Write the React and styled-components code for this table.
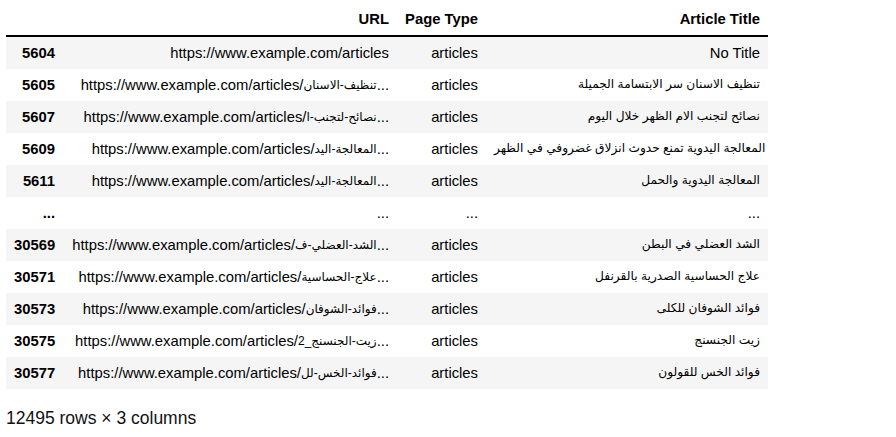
import React from "react";
import styled, { createGlobalStyle } from "styled-components";

const Global = createGlobalStyle`
  html, body { margin: 0; padding: 0; background: #ffffff; }
  body { font-family: "Liberation Sans", Arial, "DejaVu Sans", sans-serif; color: #000; }
`;

const Page = styled.div`
  padding: 3px 0 0 6px;
`;

const Table = styled.table`
  border-collapse: collapse;
  border-spacing: 0;
  table-layout: fixed;
  width: 762px;
  font-size: 14.8px;
  line-height: 16px;
  color: #000;
`;

const Head = styled.thead`
  border-bottom: 2px solid #000;
  vertical-align: bottom;
`;

const HeadCell = styled.th`
  font-weight: bold;
  text-align: right;
  padding: 8px;
  white-space: nowrap;
  width: ${(p) => p.$w}px;
`;

const Row = styled.tr`
  background: ${(p) => (p.$odd ? "#f5f5f5" : "#ffffff")};
`;

const IndexCell = styled.th`
  font-weight: bold;
  text-align: right;
  vertical-align: middle;
  padding: 8px;
  white-space: nowrap;
`;

const Cell = styled.td`
  text-align: right;
  vertical-align: middle;
  padding: 8px;
  white-space: nowrap;
  overflow: visible;
`;

const Arabic = styled.span`
  font-size: ${(p) => p.$size || 12}px;
  line-height: 10px;
  vertical-align: ${(p) => p.$lift || 0}px;
`;

const Summary = styled.p`
  margin: 19px 0 0 0;
  font-size: 17.5px;
  line-height: 20px;
  color: #111;
`;

const BASE = "https://www.example.com/articles";

const rows = [
  { idx: "5604", slug: null, type: "articles", title: "No Title", latin: true },
  { idx: "5605", slug: "تنظيف-الاسنان", type: "articles", title: "تنظيف الاسنان سر الابتسامة الجميلة" },
  { idx: "5607", slug: "نصائح-لتجنب-ا", type: "articles", title: "نصائح لتجنب الام الظهر خلال اليوم" },
  { idx: "5609", slug: "المعالجة-اليد", type: "articles", title: "المعالجة اليدوية تمنع حدوث انزلاق غضروفي في الظهر" },
  { idx: "5611", slug: "المعالجة-اليد", type: "articles", title: "المعالجة اليدوية والحمل" },
  { ellipsis: true },
  { idx: "30569", slug: "الشد-العضلي-ف", type: "articles", title: "الشد العضلي في البطن" },
  { idx: "30571", slug: "علاج-الحساسية", type: "articles", title: "علاج الحساسية الصدرية بالقرنفل" },
  { idx: "30573", slug: "فوائد-الشوفان", type: "articles", title: "فوائد الشوفان للكلى" },
  { idx: "30575", slug: "زيت-الجنسنج_2", type: "articles", title: "زيت الجنسنج" },
  { idx: "30577", slug: "فوائد-الخس-لل", type: "articles", title: "فوائد الخس للقولون" },
];

export default function App() {
  return (
    <Page>
      <Global />
      <Table>
        <Head>
          <tr>
            <HeadCell $w={41}></HeadCell>
            <HeadCell $w={318}>URL</HeadCell>
            <HeadCell $w={73}>Page Type</HeadCell>
            <HeadCell $w={266}>Article Title</HeadCell>
          </tr>
        </Head>
        <tbody>
          {rows.map((r, i) =>
            r.ellipsis ? (
              <Row key={i} $odd={i % 2 === 0}>
                <IndexCell>...</IndexCell>
                <Cell>...</Cell>
                <Cell>...</Cell>
                <Cell>...</Cell>
              </Row>
            ) : (
              <Row key={i} $odd={i % 2 === 0}>
                <IndexCell>{r.idx}</IndexCell>
                <Cell>
                  {r.slug ? (
                    <>
                      {BASE + "/"}
                      <Arabic $size={12} $lift={1}>{r.slug}</Arabic>
                      {"..."}
                    </>
                  ) : (
                    BASE
                  )}
                </Cell>
                <Cell>{r.type}</Cell>
                <Cell>{r.latin ? r.title : <Arabic $size={12.2} $lift={2}>{r.title}</Arabic>}</Cell>
              </Row>
            )
          )}
        </tbody>
      </Table>
      <Summary>12495 rows × 3 columns</Summary>
    </Page>
  );
}
